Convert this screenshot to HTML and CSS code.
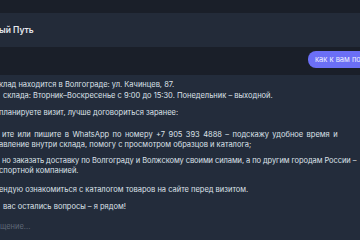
FILE: index.html
```html
<!DOCTYPE html>
<html lang="ru">
<head>
    <meta charset="UTF-8">
    <meta name="viewport" content="width=device-width, initial-scale=1.0">
    <title>Чат</title>
    <link rel="stylesheet" href="styles.css">
</head>
<body>
    <div class="app">
        <div class="topbar"></div>

        <header class="chat-header">
            <span class="chat-title">ый Путь</span>
        </header>

        <div class="user-row">
            <div class="bubble">как к вам попасть?</div>
        </div>

        <div class="bot-panel">
            <p class="msg">клад находится в Волгограде: ул. Качинцев, 87.<br><span class="pad">склада: Вторник–Воскресенье с 9:00 до 15:30. Понедельник – выходной.</span></p>
            <p class="msg">планируете визит, лучше договориться заранее:</p>
            <ul class="msg-list">
                <li><span class="pad-s wide">ите или пишите в WhatsApp по номеру +7 905 393 4888 – подскажу удобное время и</span><br>авление внутри склада, помогу с просмотром образцов и каталога;</li>
                <li><span class="pad-s tight">но заказать доставку по Волгограду и Волжскому своими силами, а по другим городам России –</span><br>спортной компанией.</li>
            </ul>
            <p class="msg">ендую ознакомиться с каталогом товаров на сайте перед визитом.</p>
            <p class="msg"><span class="pad-m">вас остались вопросы – я рядом!</span></p>

            <div class="composer">щение...</div>
        </div>
    </div>
</body>
</html>
```

FILE: styles.css
```css
body {
    margin: 0;
    padding: 0;
    background-color: #1a1f29;
    font-family: Inter, "Noto Sans", sans-serif;
    color: #dde2ea;
    width: 360px;
    height: 240px;
    overflow: hidden;
}

.app {
    display: flex;
    flex-direction: column;
    height: 240px;
}

.topbar {
    height: 13px;
    background-color: #1a1f29;
}

.chat-header {
    height: 34px;
    background-color: #232b39;
    display: flex;
    align-items: center;
}

.chat-title {
    font-size: 8.5px;
    font-weight: 600;
    color: #e6e9ef;
    margin-left: -1px;
}

.user-row {
    height: 28px;
    box-sizing: border-box;
    display: flex;
    align-items: flex-start;
    padding: 4px 0 0 308px;
    white-space: nowrap;
    overflow: hidden;
}

.bubble {
    background-color: #6b6ff6;
    color: #eef0ff;
    font-size: 7.5px;
    height: 17px;
    line-height: 17px;
    padding: 0 8px 0 7px;
    border-radius: 8px 0 0 8px;
}

.bot-panel {
    flex: 1;
    background-color: #232c3b;
    padding-top: 5px;
    font-size: 7.5px;
    line-height: 10.6px;
    white-space: nowrap;
    overflow: hidden;
}

.msg {
    margin: 0 0 6.5px -1px;
}

.pad {
    padding-left: 4px;
}

.pad-s {
    padding-left: 3px;
}

.pad-m {
    padding-left: 4px;
}

.wide {
    word-spacing: 1.3px;
}

.tight {
    letter-spacing: -0.08px;
}

.msg-list {
    list-style: none;
    margin: 11.5px 0 8.5px -1px;
    padding: 0;
}

.msg-list li {
    margin-bottom: 4.7px;
}

.composer {
    margin-top: 8.5px;
    color: #5f6877;
    font-size: 7.5px;
}
```
